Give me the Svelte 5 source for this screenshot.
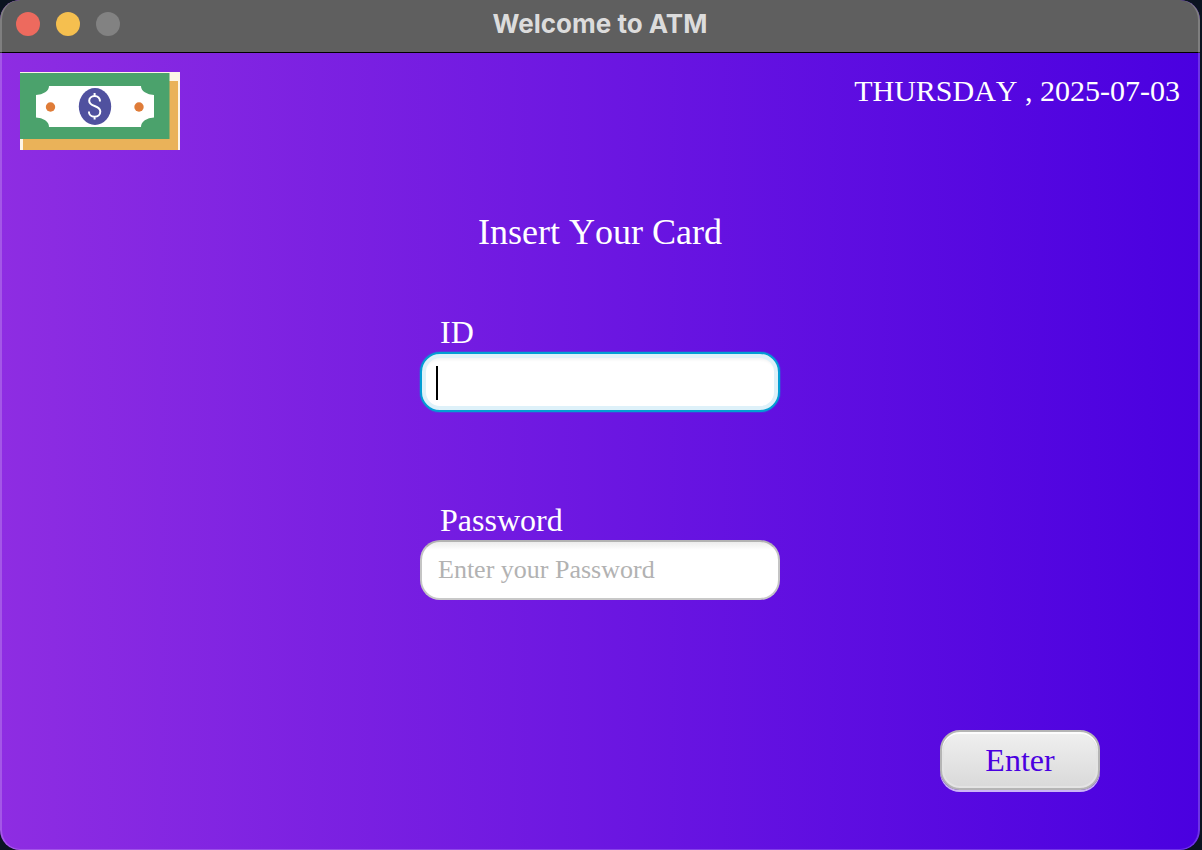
<script>
  let id = $state('');
  let password = $state('');
  let active = $state('id');
</script>

<div class="window">
  <header class="titlebar">
    <div class="lights">
      <button class="light close" aria-label="Close"></button>
      <button class="light minimize" aria-label="Minimize"></button>
      <button class="light zoom" aria-label="Zoom" disabled></button>
    </div>
    <h1>Welcome to ATM</h1>
  </header>

  <main>
    <div class="top">
      <svg class="logo" viewBox="0 0 160 78" role="img" aria-label="Banknote">
        <rect width="160" height="78" fill="#fdf4e7" />
        <rect x="3" y="9" width="155" height="69" fill="#eab259" />
        <rect y="1" width="149.500" height="66" fill="#4ba26c" />
        <path d="M29 14H121A13 9 0 0 0 134 23V45.500A13 9.500 0 0 0 121 55H29A13 9.500 0 0 0 16 45.500V23A13 9 0 0 0 29 14Z" fill="#fff" />
        <circle cx="30.500" cy="35" r="4.700" fill="#df7c38" />
        <circle cx="119" cy="35" r="4.700" fill="#df7c38" />
        <ellipse cx="75" cy="34.500" rx="16.200" ry="18.500" fill="#50519f" />
        <path d="M80 29.500C80 26.200 77.800 24 74.600 24C71.400 24 69.200 26.200 69.200 28.800C69.200 32 71.600 33 74.600 34C78.200 35.200 80.300 36.600 80.300 39.500C80.300 42.600 78 44.800 74.600 44.800C71.200 44.800 68.900 42.600 68.900 39.500M74.600 21V24M74.600 44.800V47.500" fill="none" stroke="#fff" stroke-width="2" />
      </svg>
      <time datetime="2025-07-03">THURSDAY , 2025-07-03</time>
    </div>

    <form onsubmit={(e) => e.preventDefault()}>
      <h2>Insert Your Card</h2>
      <div class="fields">
        <div class="field">
          <label for="card-id">ID</label>
          <div class="control">
            <input id="card-id" type="text" class:active={active === 'id'} bind:value={id} onfocus={() => (active = 'id')} />
            {#if active === 'id' && !id}<span class="caret"></span>{/if}
          </div>
        </div>
        <div class="field">
          <label for="password">Password</label>
          <div class="control">
            <input id="password" type="password" placeholder="Enter your Password" class:active={active === 'password'} bind:value={password} onfocus={() => (active = 'password')} />
          </div>
        </div>
      </div>
      <button class="enter" type="submit">Enter</button>
    </form>
  </main>
</div>

<style>
  :global(body) {
    margin: 0;
    background: #0b1420;
  }

  * {
    box-sizing: border-box;
  }

  .window {
    position: relative;
    display: flex;
    flex-direction: column;
    min-height: 100vh;
    margin-right: 2px;
    border-radius: 20px;
    overflow: hidden;
    background: linear-gradient(to right, #8e2de2, #4a00e0);
    color: #fff;
    font-family: "Liberation Serif", "Times New Roman", serif;
  }

  .window::after {
    content: "";
    position: absolute;
    inset: 0;
    border: 2px solid rgba(255, 255, 255, 0.2);
    border-bottom-width: 1px;
    border-top: 0;
    border-radius: 20px;
    pointer-events: none;
  }

  .titlebar {
    display: grid;
    grid-template-columns: 1fr auto 1fr;
    align-items: center;
    height: 53px;
    padding: 0 16px 4px;
    border-bottom: 1px solid #000;
    background: #5f5f5f;
  }

  .lights {
    display: flex;
    gap: 16px;
  }

  .light {
    width: 24px;
    height: 24px;
    padding: 0;
    border: 0;
    border-radius: 50%;
  }

  .close {
    background: #ed6a5e;
  }

  .minimize {
    background: #f5bf4f;
  }

  .zoom {
    background: #828282;
  }

  h1 {
    margin: 0;
    color: #dcdcdc;
    font: 700 26px/32px Inter, sans-serif;
  }

  main {
    flex: 1;
    display: flex;
    flex-direction: column;
    padding: 19px 20px 60px;
    font-kerning: none;
  }

  .top {
    display: flex;
    justify-content: space-between;
    align-items: flex-start;
  }

  .logo {
    width: 160px;
    height: 78px;
  }

  time {
    font-size: 30px;
    line-height: 38px;
  }

  form {
    flex: 1;
    display: flex;
    flex-direction: column;
    align-items: center;
    padding-top: 62px;
  }

  h2 {
    margin: 0 0 60px;
    font-size: 36px;
    font-weight: 400;
    line-height: 40px;
  }

  .fields {
    display: flex;
    flex-direction: column;
    gap: 88px;
    width: 360px;
    max-width: 100%;
    margin-bottom: 40px;
  }

  label {
    display: block;
    padding-left: 20px;
    font-size: 32px;
    line-height: 40px;
  }

  .control {
    position: relative;
  }

  input {
    display: block;
    width: 100%;
    height: 60px;
    padding: 0 16px;
    border: 2px solid;
    border-color: #b3b3b3 #c4c4c4 #c8c8c8;
    border-radius: 20px;
    outline: 0;
    background: linear-gradient(#ececec, #fff 8px);
    color: #323232;
    font: 26px "Liberation Serif", "Times New Roman", serif;
    font-kerning: none;
  }

  input::placeholder {
    color: #b2b2b2;
    opacity: 1;
  }

  input.active {
    border-color: #039ed3;
    background: #fff;
    box-shadow: inset 0 0 0 4px #def1f9, inset 0 6px 3px #f4f4f4, 0 0 0 1px rgba(3, 158, 211, 0.25);
    caret-color: transparent;
  }

  .caret {
    position: absolute;
    left: 16px;
    top: 14px;
    width: 2px;
    height: 34px;
    background: #000;
    pointer-events: none;
  }

  .enter {
    align-self: flex-end;
    width: 160px;
    height: 60px;
    margin: auto 80px 0 0;
    padding: 0;
    border: 2px solid #b5b5b5;
    border-radius: 20px;
    background: linear-gradient(#f0f0f0, #d9d9d9);
    box-shadow: inset 0 2px 0 #fdfdfd, inset 0 0 0 2px #e4e4e4, 0 2px 0 rgba(255, 255, 255, 0.7);
    color: #4a00e0;
    font: 32px "Liberation Serif", "Times New Roman", serif;
    font-kerning: none;
  }
</style>
